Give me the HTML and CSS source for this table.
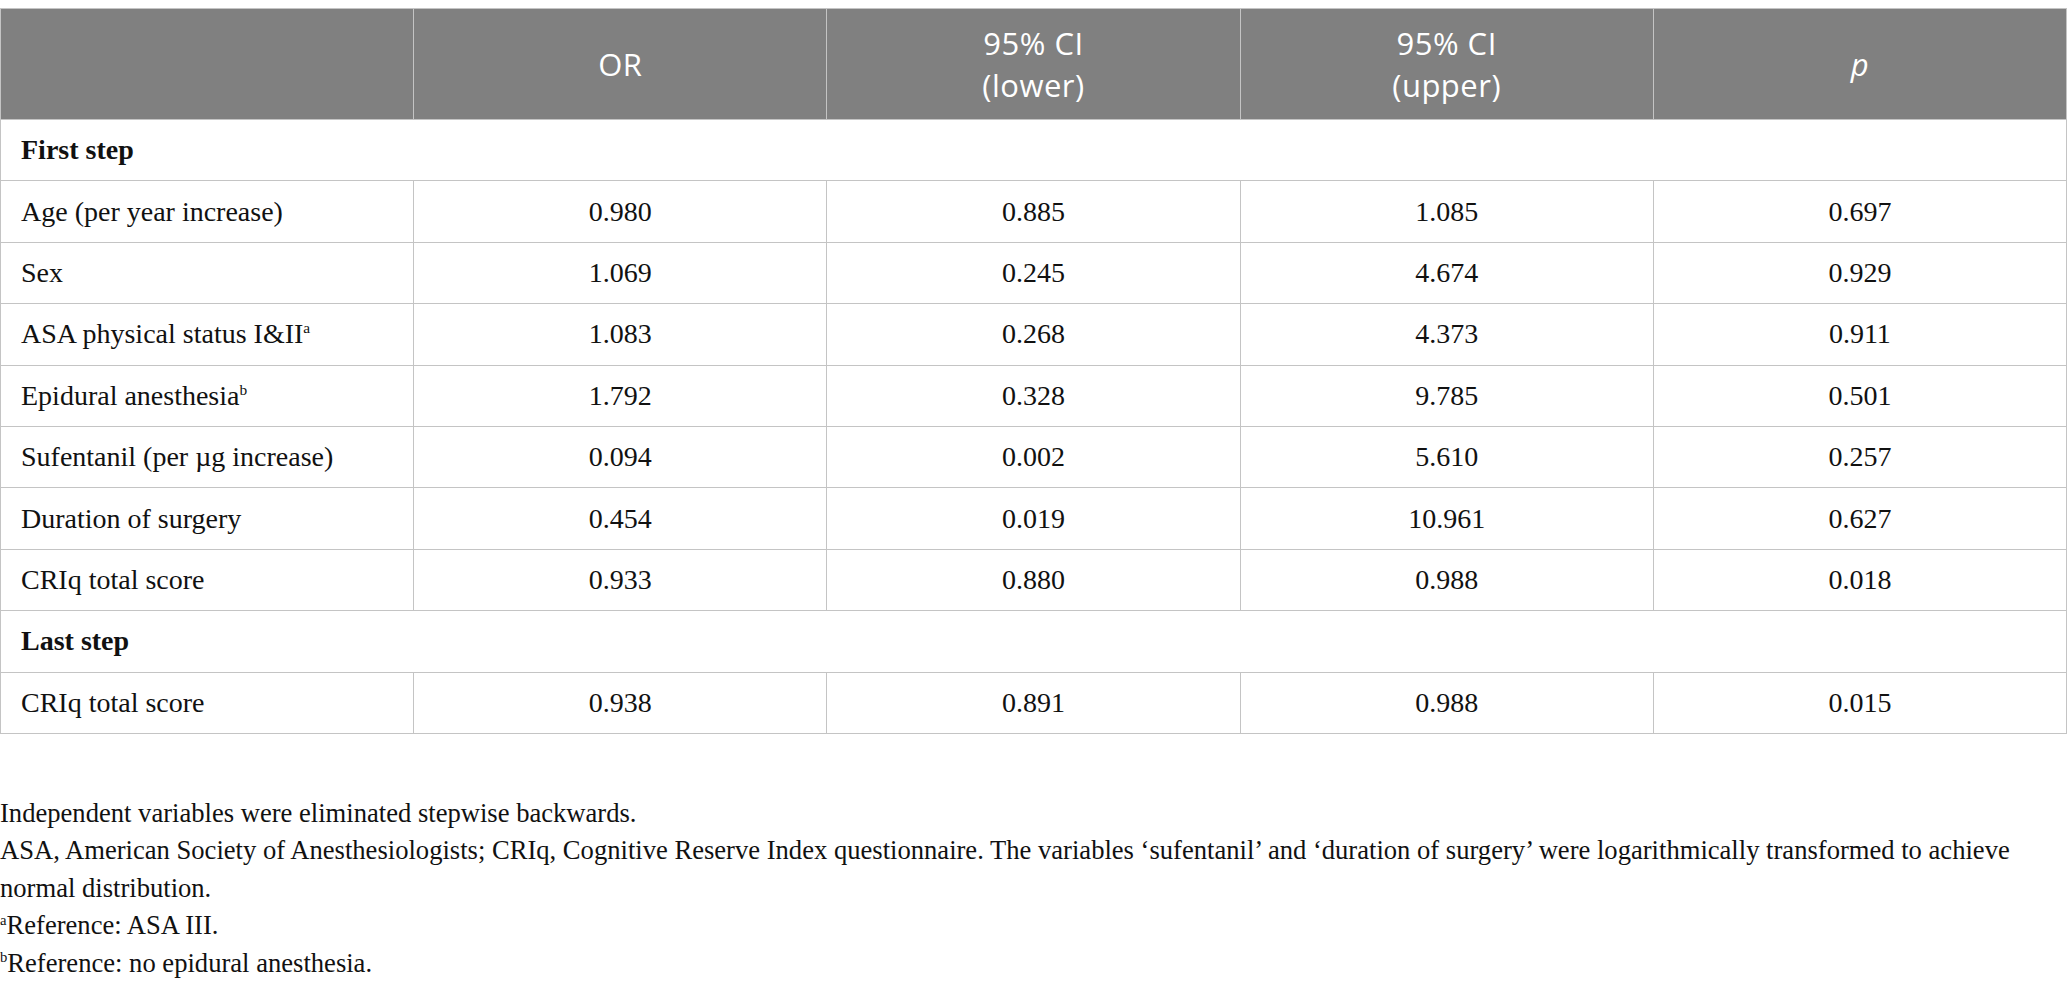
FILE: index.html
```html
<!DOCTYPE html>
<html lang="en">
<head>
    <meta charset="UTF-8">
    <title>Logistic regression</title>
    <link rel="stylesheet" href="styles.css">
</head>
<body>
    <table class="results">
        <thead>
            <tr>
                <th></th>
                <th>OR</th>
                <th>95% CI<br>(lower)</th>
                <th>95% CI<br>(upper)</th>
                <th><i>p</i></th>
            </tr>
        </thead>
        <tbody>
            <tr class="step"><td colspan="5">First step</td></tr>
            <tr><td>Age (per year increase)</td><td>0.980</td><td>0.885</td><td>1.085</td><td>0.697</td></tr>
            <tr><td>Sex</td><td>1.069</td><td>0.245</td><td>4.674</td><td>0.929</td></tr>
            <tr><td>ASA physical status I&amp;II<sup>a</sup></td><td>1.083</td><td>0.268</td><td>4.373</td><td>0.911</td></tr>
            <tr><td>Epidural anesthesia<sup>b</sup></td><td>1.792</td><td>0.328</td><td>9.785</td><td>0.501</td></tr>
            <tr><td>Sufentanil (per µg increase)</td><td>0.094</td><td>0.002</td><td>5.610</td><td>0.257</td></tr>
            <tr><td>Duration of surgery</td><td>0.454</td><td>0.019</td><td>10.961</td><td>0.627</td></tr>
            <tr><td>CRIq total score</td><td>0.933</td><td>0.880</td><td>0.988</td><td>0.018</td></tr>
            <tr class="step"><td colspan="5">Last step</td></tr>
            <tr><td>CRIq total score</td><td>0.938</td><td>0.891</td><td>0.988</td><td>0.015</td></tr>
        </tbody>
    </table>

    <div class="notes">
        <p>Independent variables were eliminated stepwise backwards.</p>
        <p>ASA, American Society of Anesthesiologists; CRIq, Cognitive Reserve Index questionnaire. The variables ‘sufentanil’ and ‘duration of surgery’ were logarithmically transformed to achieve normal distribution.</p>
        <p><sup>a</sup>Reference: ASA III.</p>
        <p><sup>b</sup>Reference: no epidural anesthesia.</p>
    </div>
</body>
</html>
```

FILE: styles.css
```css
body {
    margin: 0;
    padding-top: 8px;
    background: white;
    color: #111;
    font-family: 'Liberation Serif', 'Times New Roman', serif;
}
.results {
    width: 100%;
    table-layout: fixed;
    border-collapse: collapse;
}
.results th,
.results td {
    border: 1px solid #c4c4c4;
}
.results th {
    background: #808080;
    color: white;
    font-family: 'Open Sans', sans-serif;
    font-weight: normal;
    font-size: 31px;
    letter-spacing: 0.5px;
    line-height: 42px;
    height: 110px;
    padding: 0;
}
.results td {
    font-size: 28px;
    height: 60.4px;
    padding: 0 20px;
    text-align: center;
}
.results td:first-child {
    text-align: left;
}
.results .step td {
    font-weight: bold;
}
sup {
    font-size: 0.55em;
    line-height: 0;
    vertical-align: baseline;
    position: relative;
    top: -0.65em;
}
.notes {
    margin-top: 61px;
    font-size: 26.6px;
    line-height: 37.4px;
}
.notes p {
    margin: 0;
}
```
